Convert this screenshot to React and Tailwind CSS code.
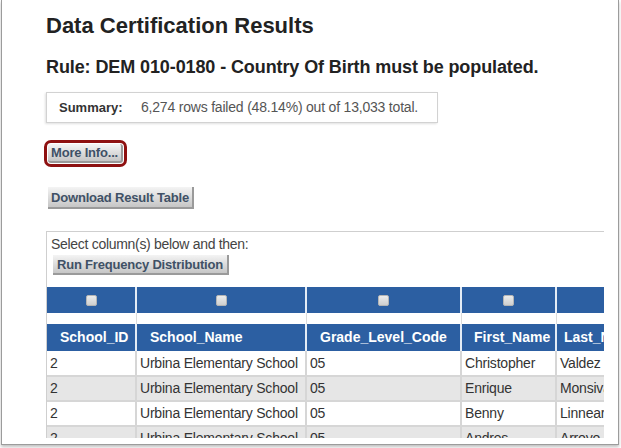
const COLS = [
  { key: 'id', label: 'School_ID', w: 'w-[89px]', pl: 'pl-[13px]' },
  { key: 'school', label: 'School_Name', w: 'w-[170px]', pl: 'pl-[13px]' },
  { key: 'grade', label: 'Grade_Level_Code', w: 'w-[155px]', pl: 'pl-[13px]' },
  { key: 'first', label: 'First_Name', w: 'w-[95px]', pl: 'pl-[12px]' },
  { key: 'last', label: 'Last_Name', w: 'w-[110px]', pl: 'pl-[7px]' },
]

const ROWS = [
  { id: '2', school: 'Urbina Elementary School', grade: '05', first: 'Christopher', last: 'Valdez' },
  { id: '2', school: 'Urbina Elementary School', grade: '05', first: 'Enrique', last: 'Monsivais' },
  { id: '2', school: 'Urbina Elementary School', grade: '05', first: 'Benny', last: 'Linnear' },
  { id: '2', school: 'Urbina Elementary School', grade: '05', first: 'Andres', last: 'Arroyo' },
]

function GrayButton({ children, className = '' }) {
  return (
    <button
      className={`bg-gradient-to-b from-[#f4f4f4] to-[#c6c6c6] border-r-2 border-b-2 border-[#9a9a9a] text-[13px] font-bold text-[#3f5166] leading-none whitespace-nowrap tracking-[-0.2px] ${className}`}
    >
      {children}
    </button>
  )
}

export default function App() {
  return (
    <div
      className="w-[621px] h-[448px] bg-white overflow-hidden"
      style={{ fontFamily: '"Liberation Sans", Arial, sans-serif' }}
    >
      <div className="ml-[1px] w-[618px] h-[445px] bg-white border-x border-b border-[#9c9c9c] shadow-[0_2px_3px_rgba(0,0,0,0.25)] overflow-hidden">
        <div className="pl-[44px] pt-[14px]">
          <h1 className="text-[22px] leading-[24px] font-bold text-[#222]">Data Certification Results</h1>
          <h2 className="mt-[19px] text-[18px] leading-[20px] font-bold text-[#222] tracking-[-0.1px]">
            Rule: DEM 010-0180 - Country Of Birth must be populated.
          </h2>

          <div className="mt-[15px] w-[392px] h-[31px] border border-[#d2d2d2] shadow-[-1px_1px_2px_rgba(0,0,0,0.12)] flex items-center pl-[12px] text-[14px] text-[#555]">
            <span className="font-bold text-[13px] text-[#333] w-[82px]">Summary:</span>
            <span className="tracking-[-0.2px]">6,274 rows failed (48.14%) out of 13,033 total.</span>
          </div>

          <div className="mt-[17px] -ml-[2px] w-[83px] h-[27px] border-[3px] border-[#8e1111] rounded-[7px] flex items-center justify-center">
            <GrayButton className="w-[75px] h-[19px] rounded-[3px] border-r-0 border-b-0 text-[13.5px]">More Info...</GrayButton>
          </div>

          <GrayButton className="mt-[20px] ml-[2px] w-[146px] h-[22px] block">Download Result Table</GrayButton>

          <div className="mt-[22px] w-[558px] h-[207px] overflow-hidden">
            <div className="w-[640px] h-full border-l border-t border-[#cfcfcf]">
              <div className="pl-[4px] pt-[5px] text-[14px] leading-[15px] text-[#444] tracking-[-0.3px]">
                Select column(s) below and then:
              </div>
              <GrayButton className="ml-[6px] mt-[3px] w-[176px] h-[20px] block">Run Frequency Distribution</GrayButton>

              <table className="mt-[12px] border-collapse table-fixed">
                <thead>
                  <tr className="h-[26px] bg-[#2c5fa2]">
                    {COLS.map(c => (
                      <th key={c.key} className={`${c.w} border-r-2 border-[#e4ecf6] p-0`}>
                        <span className="inline-block w-[11px] h-[11px] rounded-[2px] bg-gradient-to-b from-[#ececec] to-[#cfcfcf] border border-[#b5b5b5] align-middle" />
                      </th>
                    ))}
                  </tr>
                  <tr className="h-[11px] bg-white">
                    {COLS.map(c => (
                      <th key={c.key} className="border-r border-[#dcdcdc] p-0" />
                    ))}
                  </tr>
                  <tr className="h-[27px] bg-[#2c5fa2]">
                    {COLS.map(c => (
                      <th
                        key={c.key}
                        className={`${c.pl} pr-[3px] border-r-2 border-[#e4ecf6] text-[14px] font-bold text-white text-left whitespace-nowrap`}
                      >
                        {c.label}
                      </th>
                    ))}
                  </tr>
                </thead>
                <tbody>
                  {ROWS.map((r, i) => (
                    <tr key={i} className={`h-[25px] ${i % 2 ? 'bg-[#e6e6e6]' : 'bg-white'}`}>
                      {COLS.map(c => (
                        <td
                          key={c.key}
                          className="border-r-2 border-b-2 border-[#d6d6d6] px-[3px] text-[14px] text-[#333] whitespace-nowrap overflow-hidden tracking-[-0.2px]"
                        >
                          {r[c.key]}
                        </td>
                      ))}
                    </tr>
                  ))}
                </tbody>
              </table>
            </div>
          </div>
        </div>
      </div>
    </div>
  )
}
